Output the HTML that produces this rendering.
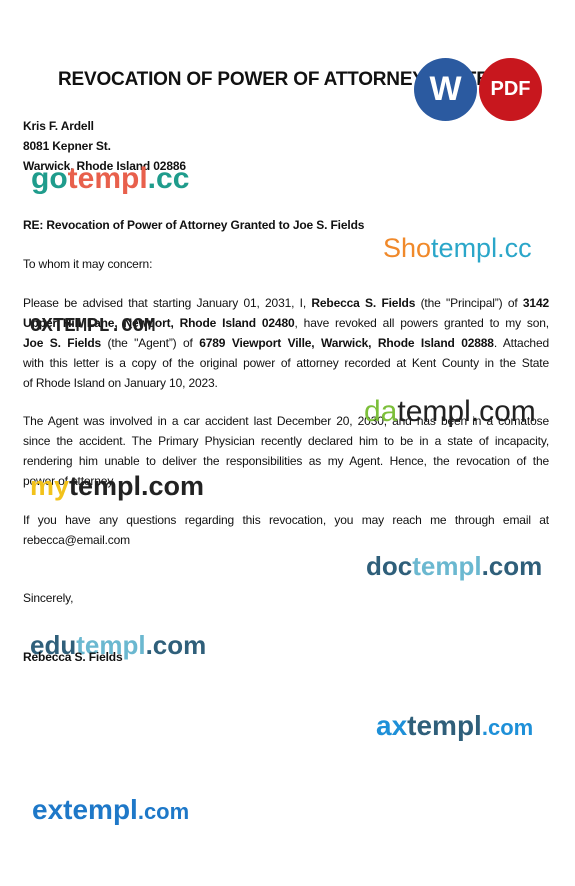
<!DOCTYPE html>
<html><head><meta charset="utf-8"><style>
body{margin:0;width:575px;height:886px;background:#fff;position:relative;overflow:hidden;font-family:"Liberation Sans",sans-serif;color:#111}
.l{position:absolute;left:23px;width:526px;font-size:12px;white-space:nowrap;line-height:14px;letter-spacing:-0.15px}
.j{text-align:justify;text-align-last:justify}
b{font-weight:bold}
.t{position:absolute;left:58px;top:69px;font-size:19px;font-weight:bold;letter-spacing:-0.2px}
.w{position:absolute;font-weight:bold;white-space:nowrap;line-height:1}
.c{position:absolute;border-radius:50%;color:#fff;font-weight:bold;display:flex;align-items:center;justify-content:center}
</style></head><body>
<div class="t">REVOCATION OF POWER OF ATTORNEY LETTER</div>
<div class="c" style="left:414px;top:58px;width:63px;height:63px;background:#2b5aa0;font-size:34px">W</div>
<div class="c" style="left:479px;top:58px;width:63px;height:63px;background:#c8171e;font-size:20px">PDF</div>

<div class="l" style="top:119px"><b>Kris F. Ardell</b></div>
<div class="l" style="top:139px"><b>8081 Kepner St.</b></div>
<div class="l" style="top:159px"><b>Warwick, Rhode Island 02886</b></div>
<div class="w" style="left:31px;top:164px;font-size:30px;color:#1f9c8c">go<span style="color:#e8604c">templ</span>.cc</div>

<div class="l" style="top:218px"><b>RE: Revocation of Power of Attorney Granted to Joe S. Fields</b></div>
<div class="w" style="left:383px;top:235px;font-size:27px;font-weight:normal;color:#2aa6c9"><span style="color:#f0892a">Sho</span>templ.cc</div>
<div class="l" style="top:257px">To whom it may concern:</div>

<div class="l j" style="top:296px">Please be advised that starting January 01, 2031, I, <b>Rebecca S. Fields</b> (the "Principal”) of <b>3142</b></div>
<div class="l j" style="top:316px"><b>Upper Hill Lane, Newport, Rhode Island 02480</b>, have revoked all powers granted to my son,</div>
<div class="l j" style="top:336px"><b>Joe S. Fields</b> (the "Agent”) of <b>6789 Viewport Ville, Warwick, Rhode Island 02888</b>. Attached</div>
<div class="l j" style="top:356px">with this letter is a copy of the original power of attorney recorded at Kent County in the State</div>
<div class="l" style="top:376px">of Rhode Island on January 10, 2023.</div>
<div class="w" style="left:30px;top:317px;font-size:19px;color:#222;font-family:'Liberation Mono',monospace">OXTEMPL.COM</div>

<div class="l j" style="top:414px">The Agent was involved in a car accident last December 20, 2030, and has been in a comatose</div>
<div class="l j" style="top:434px">since the accident. The Primary Physician recently declared him to be in a state of incapacity,</div>
<div class="l j" style="top:454px">rendering him unable to deliver the responsibilities as my Agent. Hence, the revocation of the</div>
<div class="l" style="top:474px">power of attorney.</div>
<div class="w" style="left:364px;top:397px;font-size:30px;font-weight:normal;color:#222"><span style="color:#7cbf3a">da</span>templ.com</div>
<div class="w" style="left:30px;top:473px;font-size:27px;color:#222"><span style="color:#f2c21b">my</span>templ.com</div>

<div class="l j" style="top:513px">If you have any questions regarding this revocation, you may reach me through email at</div>
<div class="l" style="top:533px">rebecca@email.com</div>
<div class="w" style="left:366px;top:553px;font-size:26px;color:#2f5f7a">doc<span style="color:#6bb8d0">templ</span>.com</div>

<div class="l" style="top:591px">Sincerely,</div>
<div class="w" style="left:30px;top:632px;font-size:26px;color:#2f5f7a">edu<span style="color:#6bb8d0">templ</span>.com</div>
<div class="l" style="top:650px"><b>Rebecca S. Fields</b></div>

<div class="w" style="left:376px;top:712px;font-size:28px;color:#2f5f7a"><span style="color:#1e90d8">ax</span>templ<span style="font-size:22px;color:#1e90d8">.com</span></div>
<div class="w" style="left:32px;top:796px;font-size:28px;color:#1e78c8">extempl<span style="font-size:22px">.com</span></div>
</body></html>
